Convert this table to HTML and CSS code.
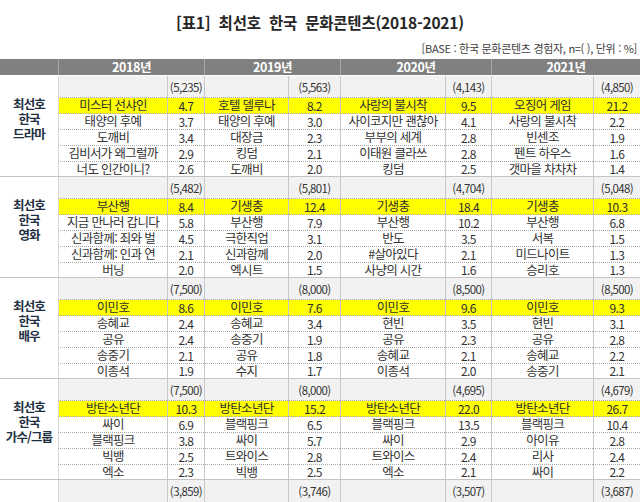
FILE: index.html
```html
<!DOCTYPE html>
<html lang="ko">
<head>
<meta charset="utf-8">
<link rel="stylesheet" href="styles.css">
</head>
<body>
<div class="page">
  <h1 class="title">[표1] 최선호 한국 문화콘텐츠(2018-2021)</h1>
  <p class="base">[BASE : 한국 문화콘텐츠 경험자, n=( ), 단위 : %]</p>

  <div class="hdr">
    <div class="hc first"></div>
    <div class="hc">2018년</div>
    <div class="hc">2019년</div>
    <div class="hc">2020년</div>
    <div class="hc">2021년</div>
  </div>

  <div class="sec">
    <div class="cat">최선호<br>한국<br>드라마</div>
    <div class="c n nm"></div><div class="c n v">(5,235)</div>
    <div class="c n"></div><div class="c n v">(5,563)</div>
    <div class="c n"></div><div class="c n v">(4,143)</div>
    <div class="c n"></div><div class="c n v">(4,850)</div>

    <div class="c y nm">미스터 선샤인</div><div class="c y v">4.7</div>
    <div class="c y">호텔 델루나</div><div class="c y v">8.2</div>
    <div class="c y">사랑의 불시착</div><div class="c y v">9.5</div>
    <div class="c y">오징어 게임</div><div class="c y v">21.2</div>

    <div class="c d nm">태양의 후예</div><div class="c d v">3.7</div>
    <div class="c d">태양의 후예</div><div class="c d v">3.0</div>
    <div class="c d">사이코지만 괜찮아</div><div class="c d v">4.1</div>
    <div class="c d">사랑의 불시착</div><div class="c d v">2.2</div>

    <div class="c d nm">도깨비</div><div class="c d v">3.4</div>
    <div class="c d">대장금</div><div class="c d v">2.3</div>
    <div class="c d">부부의 세계</div><div class="c d v">2.8</div>
    <div class="c d">빈센조</div><div class="c d v">1.9</div>

    <div class="c d nm">김비서가 왜그럴까</div><div class="c d v">2.9</div>
    <div class="c d">킹덤</div><div class="c d v">2.1</div>
    <div class="c d">이태원 클라쓰</div><div class="c d v">2.8</div>
    <div class="c d">펜트 하우스</div><div class="c d v">1.6</div>

    <div class="c nm">너도 인간이니?</div><div class="c v">2.6</div>
    <div class="c">도깨비</div><div class="c v">2.0</div>
    <div class="c">킹덤</div><div class="c v">2.5</div>
    <div class="c">갯마을 차차차</div><div class="c v">1.4</div>
  </div>

  <div class="sec">
    <div class="cat">최선호<br>한국<br>영화</div>
    <div class="c n nm"></div><div class="c n v">(5,482)</div>
    <div class="c n"></div><div class="c n v">(5,801)</div>
    <div class="c n"></div><div class="c n v">(4,704)</div>
    <div class="c n"></div><div class="c n v">(5,048)</div>

    <div class="c y nm">부산행</div><div class="c y v">8.4</div>
    <div class="c y">기생충</div><div class="c y v">12.4</div>
    <div class="c y">기생충</div><div class="c y v">18.4</div>
    <div class="c y">기생충</div><div class="c y v">10.3</div>

    <div class="c d nm">지금 만나러 갑니다</div><div class="c d v">5.8</div>
    <div class="c d">부산행</div><div class="c d v">7.9</div>
    <div class="c d">부산행</div><div class="c d v">10.2</div>
    <div class="c d">부산행</div><div class="c d v">6.8</div>

    <div class="c d nm">신과함께: 죄와 벌</div><div class="c d v">4.5</div>
    <div class="c d">극한직업</div><div class="c d v">3.1</div>
    <div class="c d">반도</div><div class="c d v">3.5</div>
    <div class="c d">서복</div><div class="c d v">1.5</div>

    <div class="c d nm">신과함께: 인과 연</div><div class="c d v">2.1</div>
    <div class="c d">신과함께</div><div class="c d v">2.0</div>
    <div class="c d">#살아있다</div><div class="c d v">2.1</div>
    <div class="c d">미드나이트</div><div class="c d v">1.3</div>

    <div class="c nm">버닝</div><div class="c v">2.0</div>
    <div class="c">엑시트</div><div class="c v">1.5</div>
    <div class="c">사냥의 시간</div><div class="c v">1.6</div>
    <div class="c">승리호</div><div class="c v">1.3</div>
  </div>

  <div class="sec">
    <div class="cat">최선호<br>한국<br>배우</div>
    <div class="c n nm"></div><div class="c n v">(7,500)</div>
    <div class="c n"></div><div class="c n v">(8,000)</div>
    <div class="c n"></div><div class="c n v">(8,500)</div>
    <div class="c n"></div><div class="c n v">(8,500)</div>

    <div class="c y nm">이민호</div><div class="c y v">8.6</div>
    <div class="c y">이민호</div><div class="c y v">7.6</div>
    <div class="c y">이민호</div><div class="c y v">9.6</div>
    <div class="c y">이민호</div><div class="c y v">9.3</div>

    <div class="c d nm">송혜교</div><div class="c d v">2.4</div>
    <div class="c d">송혜교</div><div class="c d v">3.4</div>
    <div class="c d">현빈</div><div class="c d v">3.5</div>
    <div class="c d">현빈</div><div class="c d v">3.1</div>

    <div class="c d nm">공유</div><div class="c d v">2.4</div>
    <div class="c d">송중기</div><div class="c d v">1.9</div>
    <div class="c d">공유</div><div class="c d v">2.3</div>
    <div class="c d">공유</div><div class="c d v">2.8</div>

    <div class="c d nm">송중기</div><div class="c d v">2.1</div>
    <div class="c d">공유</div><div class="c d v">1.8</div>
    <div class="c d">송혜교</div><div class="c d v">2.1</div>
    <div class="c d">송혜교</div><div class="c d v">2.2</div>

    <div class="c nm">이종석</div><div class="c v">1.9</div>
    <div class="c">수지</div><div class="c v">1.7</div>
    <div class="c">이종석</div><div class="c v">2.0</div>
    <div class="c">송중기</div><div class="c v">2.1</div>
  </div>

  <div class="sec">
    <div class="cat">최선호<br>한국<br>가수/그룹</div>
    <div class="c n nm"></div><div class="c n v">(7,500)</div>
    <div class="c n"></div><div class="c n v">(8,000)</div>
    <div class="c n"></div><div class="c n v">(4,695)</div>
    <div class="c n"></div><div class="c n v">(4,679)</div>

    <div class="c y nm">방탄소년단</div><div class="c y v">10.3</div>
    <div class="c y">방탄소년단</div><div class="c y v">15.2</div>
    <div class="c y">방탄소년단</div><div class="c y v">22.0</div>
    <div class="c y">방탄소년단</div><div class="c y v">26.7</div>

    <div class="c d nm">싸이</div><div class="c d v">6.9</div>
    <div class="c d">블랙핑크</div><div class="c d v">6.5</div>
    <div class="c d">블랙핑크</div><div class="c d v">13.5</div>
    <div class="c d">블랙핑크</div><div class="c d v">10.4</div>

    <div class="c d nm">블랙핑크</div><div class="c d v">3.8</div>
    <div class="c d">싸이</div><div class="c d v">5.7</div>
    <div class="c d">싸이</div><div class="c d v">2.9</div>
    <div class="c d">아이유</div><div class="c d v">2.8</div>

    <div class="c d nm">빅뱅</div><div class="c d v">2.5</div>
    <div class="c d">트와이스</div><div class="c d v">2.8</div>
    <div class="c d">트와이스</div><div class="c d v">2.4</div>
    <div class="c d">리사</div><div class="c d v">2.4</div>

    <div class="c nm">엑소</div><div class="c v">2.3</div>
    <div class="c">빅뱅</div><div class="c v">2.5</div>
    <div class="c">엑소</div><div class="c v">2.1</div>
    <div class="c">싸이</div><div class="c v">2.2</div>
  </div>

  <div class="sec last">
    <div class="cat"></div>
    <div class="c n nm"></div><div class="c n v">(3,859)</div>
    <div class="c n"></div><div class="c n v">(3,746)</div>
    <div class="c n"></div><div class="c n v">(3,507)</div>
    <div class="c n"></div><div class="c n v">(3,687)</div>
  </div>
</div>
</body>
</html>
```
FILE: styles.css
```css
* { box-sizing: border-box; }
html, body { margin: 0; padding: 0; background: #fff; }
body {
  font-family: "Noto Sans CJK KR", "Noto Sans", sans-serif;
  color: #3a3a3a;
}
.page { width: 640px; overflow: hidden; }

.title {
  margin: 0;
  padding-top: 12px;
  height: 31px;
  line-height: 20px;
  font-size: 15.5px;
  font-weight: 700;
  text-align: center;
  color: #262626;
  word-spacing: 4px;
  letter-spacing: -0.2px;
}
.base {
  margin: 0;
  height: 28px;
  padding-top: 10px;
  padding-right: 3px;
  line-height: 14px;
  font-size: 11px;
  text-align: right;
  color: #404040;
  letter-spacing: -0.3px;
}

.hdr {
  display: grid;
  grid-template-columns: 58px 146px 136px 151px 149px;
  height: 16px;
  background: #808080;
  margin-bottom: 1px;
}
.hc {
  display: flex;
  align-items: center;
  justify-content: center;
  color: #fff;
  font-weight: 700;
  font-size: 12.5px;
  line-height: 1;
  letter-spacing: -0.4px;
  border-left: 1px solid #a8a8a8;
}
.hc.first { border-left: none; }

.sec {
  display: grid;
  grid-template-columns: 58px 109px 37px 84px 52px 105px 46px 102px 47px;
  grid-template-rows: 22px 16px 16px 16px 16px 14px;
  border-bottom: 1px solid #c4c4c4;
}
.sec.last {
  grid-template-rows: 22px;
  border-bottom: none;
}
.cat {
  grid-row: 1 / -1;
  padding-top: 20px;
  text-align: center;
  font-weight: 700;
  font-size: 12.5px;
  line-height: 15px;
  letter-spacing: -0.9px;
  color: #1e2f42;
}
.c {
  display: flex;
  align-items: center;
  justify-content: center;
  white-space: nowrap;
  border-left: 1px solid #c8c8c8;
  font-size: 12.5px;
  letter-spacing: -0.7px;
  line-height: 1;
  color: #333;
}
.c.nm { border-left-color: #d8d8d8; }
.c.v { font-size: 12px; letter-spacing: -0.6px; }
.c.n {
  background: #f2f2f2;
  border-bottom: 1px dotted #a8a8a8;
  font-size: 11.5px;
  letter-spacing: -0.6px;
  padding-top: 2px;
}
.sec.last .c.n { border-bottom: none; }
.c.y {
  background: #ffff00;
  border-bottom: 1px dotted #a8a8a8;
  color: #2e2e2e;
}
.c.d { border-bottom: 1px dotted #a8a8a8; }
```
